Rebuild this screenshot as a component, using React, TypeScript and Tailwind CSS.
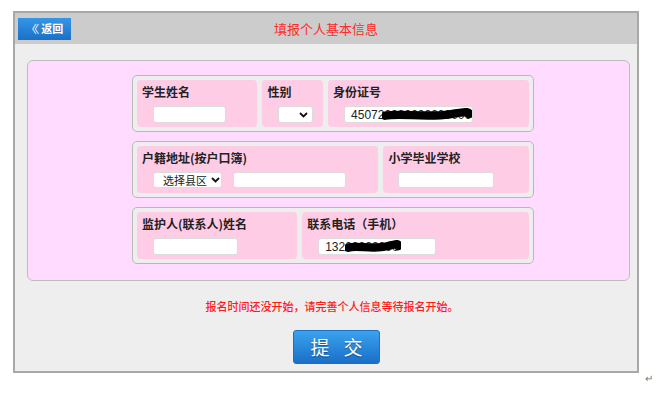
import React from "react";

const font = { fontFamily: '"Microsoft YaHei", "Noto Sans CJK SC", "Noto Sans", sans-serif' };

function Chevron() {
  return (
    <svg width="9" height="6" viewBox="0 0 9 6" className="shrink-0">
      <path d="M1 1 L4.5 4.5 L8 1" stroke="#111" strokeWidth="1.8" fill="none" />
    </svg>
  );
}

function Input({ w, h = 17, children }: { w: number; h?: number; children?: React.ReactNode }) {
  return (
    <div
      className="bg-white border border-[#dcdcdc] rounded-[3px] relative overflow-hidden flex items-center shrink-0"
      style={{ width: w, height: h }}
    >
      {children}
    </div>
  );
}

function Scribble({ w, h }: { w: number; h: number }) {
  return (
    <svg width={w} height={h} viewBox={`0 0 ${w} ${h}`} className="absolute top-0 left-0">
      <path
        d={`M3 ${h * 0.55} C ${w * 0.2} ${h * 0.35}, ${w * 0.5} ${h * 0.7}, ${w * 0.75} ${h * 0.45} S ${w - 4} ${h * 0.3}, ${w - 3} ${h * 0.45}`}
        stroke="#000"
        strokeWidth={h * 0.6}
        strokeLinecap="round"
        fill="none"
      />
    </svg>
  );
}

function Cell({ w, label, children }: { w: number; label: string; children: React.ReactNode }) {
  return (
    <div className="bg-[#ffcce6] rounded-[4px] h-[47px] flex flex-col" style={{ width: w }}>
      <div className="pl-[5px] pt-[4px] text-[12px] leading-[16px] font-bold text-[#222] whitespace-nowrap">{label}</div>
      <div className="pl-[16px] mt-[6px] flex items-center gap-[11px]">{children}</div>
    </div>
  );
}

function Group({ children }: { children: React.ReactNode }) {
  return (
    <div className="ml-[104px] w-[402px] h-[57px] border border-[#b8b8b8] bg-[#eeeeee] rounded-[5px] p-[4px] flex gap-[5px]">
      {children}
    </div>
  );
}

export default function App() {
  return (
    <div className="w-[659px] h-[395px] bg-white pt-[11px] pl-[13px] flex items-start" style={font}>
      <div className="w-[626px] h-[362px] border-2 border-[#a8a8a8] bg-[#eeeeee] flex flex-col">
        <div className="h-[31px] bg-[#cccccc] flex items-center px-[3px]">
          <div className="w-[53px] h-[22px] bg-gradient-to-b from-[#3596e6] to-[#1a70c6] flex items-center justify-center gap-[3px] text-white text-[11px] font-bold">
            <span className="tracking-[-3px] font-normal pr-[2px]">〈〈</span>
            <span>返回</span>
          </div>
          <div className="flex-1 text-center text-[13px] text-[#ff2a2a]">填报个人基本信息</div>
          <div className="w-[53px]" />
        </div>
        <div className="flex-1 flex flex-col">
          <div className="mt-[16px] ml-[12px] w-[603px] h-[221px] bg-[#ffdcff] border border-[#bdbdbd] rounded-[6px] pt-[14px] flex flex-col gap-[9px]">
            <Group>
              <Cell w={121} label="学生姓名">
                <Input w={73} />
              </Cell>
              <Cell w={61} label="性别">
                <Input w={35}>
                  <div className="ml-auto mr-[4px]">
                    <Chevron />
                  </div>
                </Input>
              </Cell>
              <Cell w={202} label="身份证号">
                <Input w={129}>
                  <span className="pl-[6px] text-[12px] text-[#222]" style={{ fontFamily: '"Liberation Sans", Arial, sans-serif' }}>
                    450720000000000000
                  </span>
                  <div className="absolute left-[37px] top-[1px]">
                    <div className="relative w-[90px] h-[14px]">
                      <Scribble w={90} h={14} />
                    </div>
                  </div>
                </Input>
              </Cell>
            </Group>
            <Group>
              <Cell w={242} label="户籍地址(按户口簿)">
                <Input w={69} h={16}>
                  <span className="pl-[9px] text-[11px] leading-[14px] text-[#222] mr-[4px] whitespace-nowrap">选择县区</span>
                  <Chevron />
                </Input>
                <Input w={113} h={16} />
              </Cell>
              <Cell w={146} label="小学毕业学校">
                <div className="-ml-[1px]">
                  <Input w={96} h={16} />
                </div>
              </Cell>
            </Group>
            <Group>
              <Cell w={161} label="监护人(联系人)姓名">
                <Input w={85} />
              </Cell>
              <Cell w={228} label="联系电话（手机）">
                <Input w={118}>
                  <span className="pl-[6px] text-[12px] text-[#222]" style={{ fontFamily: '"Liberation Sans", Arial, sans-serif' }}>
                    13200000000
                  </span>
                  <div className="absolute left-[26px] top-[1px]">
                    <div className="relative w-[56px] h-[14px]">
                      <Scribble w={56} h={14} />
                    </div>
                  </div>
                </Input>
              </Cell>
            </Group>
          </div>
          <div className="mt-[18px] text-center text-[11px] leading-[15px] text-[#ff1a1a] font-medium pl-[12px]">
            报名时间还没开始，请完善个人信息等待报名开始。
          </div>
          <div className="mt-[16px] flex justify-center pl-[21px]">
            <div className="w-[87px] h-[34px] rounded-[3px] border border-[#1f6fc0] bg-gradient-to-b from-[#3aa3ee] to-[#1a6fc8] flex items-center justify-center text-white text-[19px] tracking-[14px] pl-[14px] [text-shadow:0_1px_1px_rgba(0,0,0,0.4)]">
              提交
            </div>
          </div>
        </div>
      </div>
      <div className="ml-[6px] mt-[361px] text-[10px] leading-[12px] text-[#777]">↵</div>
    </div>
  );
}
